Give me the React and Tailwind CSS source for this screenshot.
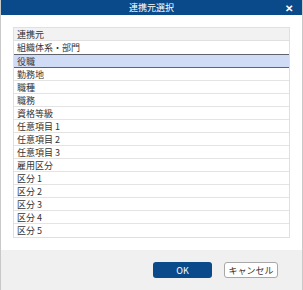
const ROWS = [
  '組織体系・部門',
  '役職',
  '勤務地',
  '職種',
  '職務',
  '資格等級',
  '任意項目 1',
  '任意項目 2',
  '任意項目 3',
  '雇用区分',
  '区分 1',
  '区分 2',
  '区分 3',
  '区分 4',
  '区分 5',
]

const font = { fontFamily: '"Noto Sans CJK JP", "Noto Sans", sans-serif' }

export default function App() {
  const selected = 1
  return (
    <div
      className="flex h-[290px] w-[303px] flex-col border-x border-[#c8c8c8] bg-white text-[9px] text-[#333]"
      style={font}
    >
      {/* title bar */}
      <div className="relative flex h-[15px] shrink-0 items-center justify-center bg-[#0b4a8a] text-[9px] leading-none text-white">
        <span>連携元選択</span>
        <span className="absolute right-[9px] top-[3px] text-[10px] font-bold leading-none">✕</span>
      </div>

      {/* list */}
      <div className="flex-1 px-[12px] pt-[12px]">
        <div className="border border-[#e0e0e0]">
          <div className="flex h-[13px] items-center border-b border-[#e0e0e0] bg-[#f2f2f2] px-[3px] leading-none">
            連携元
          </div>
          {ROWS.map((label, i) =>
            i === selected ? (
              <div
                key={label}
                className="flex h-[14px] items-center border-y border-[#5f636b] bg-[#d0dbf6] px-[3px] leading-none"
              >
                {label}
              </div>
            ) : (
              <div
                key={label}
                className={`flex h-[13px] items-center px-[3px] leading-none ${
                  i === ROWS.length - 1 || i === selected - 1 ? '' : 'border-b border-[#e3e3e3]'
                }`}
              >
                {label}
              </div>
            )
          )}
        </div>
      </div>

      {/* footer */}
      <div className="flex h-[40px] shrink-0 items-start justify-end gap-[12px] bg-[#f0f0f0] pr-[24px] pt-[12px]">
        <button className="h-[16px] w-[59px] rounded-[3px] bg-[#0b4a8a] text-[9px] leading-none text-white">
          OK
        </button>
        <button className="h-[16px] w-[54px] rounded-[3px] border border-[#a8a8a8] bg-white text-[9px] leading-none text-[#333]">
          キャンセル
        </button>
      </div>
    </div>
  )
}
